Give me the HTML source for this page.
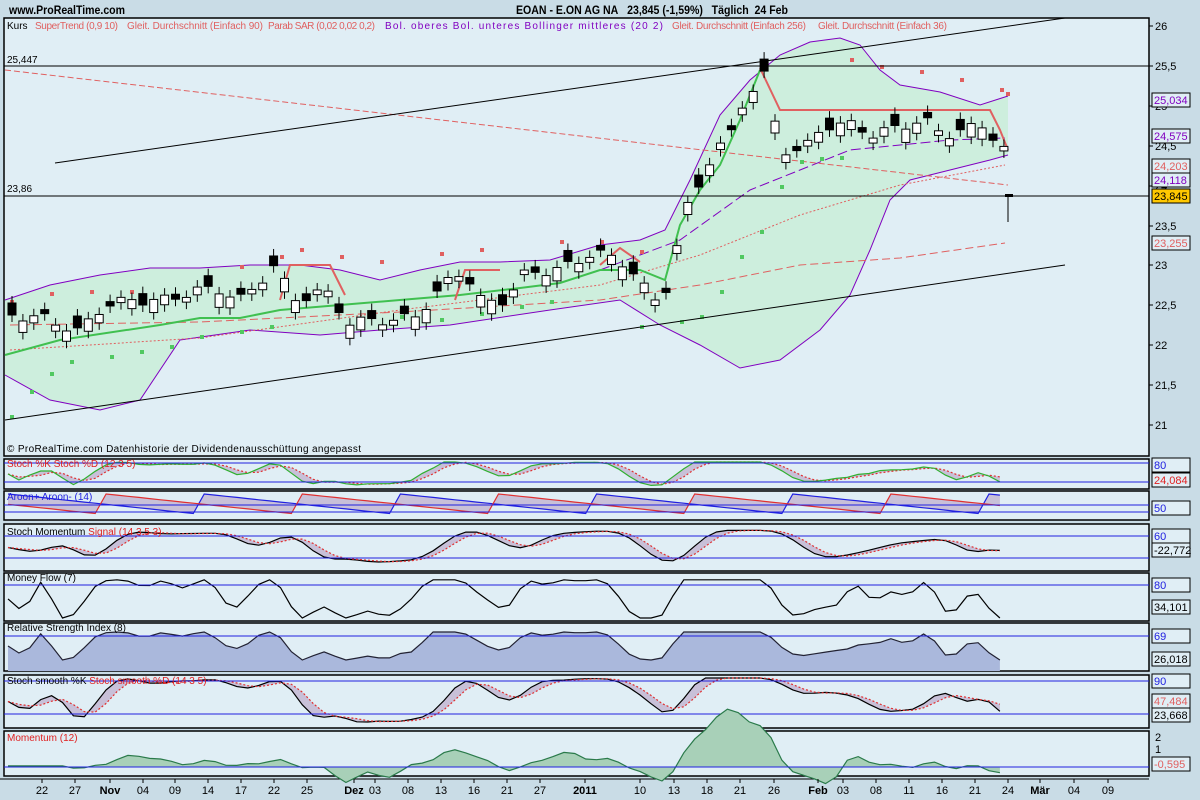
<!DOCTYPE html><html><head><meta charset="utf-8"><style>
body{margin:0;width:1200px;height:800px;background:#c9dce6;font-family:"Liberation Sans",sans-serif;overflow:hidden}
svg{position:absolute;left:0;top:0}
</style></head><body>
<svg id="s" width="1200" height="800" xmlns="http://www.w3.org/2000/svg" font-family="Liberation Sans, sans-serif">
<text x="9" y="14" font-size="12" font-weight="bold" textLength="116" lengthAdjust="spacingAndGlyphs">www.ProRealTime.com</text>
<text x="516" y="14" font-size="12" font-weight="bold" textLength="272" lengthAdjust="spacingAndGlyphs">EOAN - E.ON AG NA&#160;&#160;&#160;23,845 (-1,59%)&#160;&#160;&#160;Täglich&#160;&#160;24 Feb</text>
<g id="panels"></g>
<g id="content"></g>
<g font-size="10" lengthAdjust="spacing">
<text x="7" y="29">Kurs</text>
<text x="35" y="29" fill="#e06060" textLength="83">SuperTrend (0,9 10)</text>
<text x="127" y="29" fill="#e06060" textLength="136">Gleit. Durchschnitt (Einfach 90)</text>
<text x="268" y="29" fill="#e06060" textLength="107">Parab SAR (0,02 0,02 0,2)</text>
<text x="385" y="29" fill="#8000c0" textLength="278">Bol. oberes Bol. unteres Bollinger mittleres (20 2)</text>
<text x="672" y="29" fill="#e06060" textLength="134">Gleit. Durchschnitt (Einfach 256)</text>
<text x="818" y="29" fill="#e06060" textLength="129">Gleit. Durchschnitt (Einfach 36)</text>
<text x="7" y="63">25,447</text><text x="7" y="192">23,86</text>
<text x="7" y="452" textLength="354">© ProRealTime.com Datenhistorie der Dividendenausschüttung angepasst</text>
<text x="7" y="467" fill="#e02020">Stoch %K Stoch %D (12 3 5)</text>
<text x="7" y="500" fill="#2020e0">Aroon+ Aroon- (14)</text>
<text x="7" y="535">Stoch Momentum <tspan fill="#e02020">Signal (14 3 5 3)</tspan></text>
<text x="7" y="581">Money Flow (7)</text>
<text x="7" y="631">Relative Strength Index (8)</text>
<text x="7" y="684">Stoch smooth %K <tspan fill="#e02020">Stoch smooth %D (14 3 5)</tspan></text>
<text x="7" y="741" fill="#e02020">Momentum (12)</text>
</g>
<g id="axis" font-size="11"></g>
</svg>
<script>
const S=document.getElementById('s'),C=document.getElementById('content'),P=document.getElementById('panels'),A=document.getElementById('axis');
const NS='http://www.w3.org/2000/svg';
function el(t,a,p){const e=document.createElementNS(NS,t);for(const k in a)e.setAttribute(k,a[k]);(p||C).appendChild(e);if(a.text)e.textContent=a.text;return e;}
function interp(pts,x){for(let i=0;i<pts.length-1;i++){if(x<=pts[i+1][0]){const t=(x-pts[i][0])/(pts[i+1][0]-pts[i][0]);return pts[i][1]+t*(pts[i+1][1]-pts[i][1]);}}return pts[pts.length-1][1];}
function pl(pts){return pts.map(p=>p[0].toFixed(1)+','+p[1].toFixed(1)).join(' ');}
const panels=[[18,456],[459,489],[491,520],[524,571],[573,621],[623,671],[675,728],[731,776]];
panels.forEach(p=>el('rect',{x:4,y:p[0],width:1145,height:p[1]-p[0],fill:'#e0eef5',stroke:'#000','stroke-width':1.5},P));
el('line',{x1:0,y1:779,x2:1149,y2:779,stroke:'#000'},P);
const key=[[8,315],[40,318],[75,332],[100,305],[130,300],[165,300],[190,290],[215,290],[240,300],[270,265],[290,300],[320,290],[345,322],[380,320],[410,318],[440,285],[460,270],[480,305],[500,300],[520,275],[545,270],[570,265],[590,250],[610,260],[625,265],[645,295],[655,305],[665,280],[680,215],[695,185],[710,150],[725,140],[740,100],[760,75],[770,120],[780,150],[800,150],[820,125],[850,125],[870,135],[900,125],[920,120],[940,135],[960,130],[980,125],[1000,150],[1008,196]];
const xs=[];for(let x=8;x<=1000;x+=10.9)xs.push(x);
const ys=xs.map((x,i)=>interp(key,x)+Math.sin(i*1.7)*5);
const bu=[[5,300],[50,285],[100,275],[150,268],[200,268],[250,265],[300,265],[340,270],[380,280],[420,270],[460,262],[500,262],[550,260],[600,245],[640,240],[665,230],[690,180],[720,115],[750,80],[780,55],[810,42],[840,38],[860,45],[880,70],[900,85],[940,92],[980,105],[1008,96]];
const bl=[[5,375],[50,400],[100,410],[140,400],[180,340],[250,330],[320,335],[380,330],[450,325],[550,310],[620,300],[660,325],[700,345],[740,368],[780,360],[820,330],[850,295],[870,250],[890,200],[910,180],[950,170],[990,160],[1008,155]];
el('polygon',{points:pl(bu)+' '+pl(bl.slice().reverse()),fill:'#cdeedd'});
el('polyline',{points:pl(bu),fill:'none',stroke:'#8000c0'});
el('polyline',{points:pl(bl),fill:'none',stroke:'#8000c0'});
el('polyline',{points:'5,70 1008,185',fill:'none',stroke:'#e06060','stroke-dasharray':'6,3'});
el('polyline',{points:'10,350 200,338 400,310 600,285 700,255 800,215 900,185 1005,165',fill:'none',stroke:'#e06060','stroke-dasharray':'2,2'});
el('polyline',{points:'10,325 200,322 400,312 600,300 700,285 800,265 900,258 1005,243',fill:'none',stroke:'#e06060','stroke-dasharray':'8,4'});
el('polyline',{points:'600,270 680,240 750,190 850,150 950,140 1005,138',fill:'none',stroke:'#8000c0','stroke-dasharray':'10,4'});
el('polyline',{points:'5,355 60,340 160,325 200,318 240,318 280,310 340,305 400,300 460,295 520,288 560,283 600,270 640,270 665,280 680,225 700,190 720,165 740,120 750,95 760,70',fill:'none',stroke:'#40c050','stroke-width':2});
el('polyline',{points:'280,300 290,265 330,265 345,295',fill:'none',stroke:'#e06060','stroke-width':2});
el('polyline',{points:'455,300 465,270 500,270',fill:'none',stroke:'#e06060','stroke-width':2});
el('polyline',{points:'600,265 620,248 640,262',fill:'none',stroke:'#e06060','stroke-width':2});
el('polyline',{points:'760,68 780,110 990,110 1000,130 1008,150',fill:'none',stroke:'#e06060','stroke-width':2});
const g=[[10,415],[30,390],[50,372],[70,360],[110,355],[140,350],[170,345],[200,335],[240,330],[270,325],[400,315],[440,318],[480,312],[520,305],[550,300],[640,325],[680,320],[700,315],[720,290],[740,255],[760,230],[780,185],[800,160],[820,157],[840,156]];
g.forEach(p=>el('rect',{x:p[0],y:p[1],width:4,height:4,fill:'#50c860'}));
const r=[[10,300],[50,292],[90,290],[130,290],[240,265],[280,255],[300,248],[340,255],[380,260],[440,252],[480,248],[560,240],[600,240],[640,250],[850,58],[880,65],[920,70],[960,78],[1000,88],[1006,92]];
r.forEach(p=>el('rect',{x:p[0],y:p[1],width:4,height:4,fill:'#e06060'}));
xs.forEach((x,i)=>{const c=ys[i],o=ys[i]+(i%3==0?-8:9)*(1+Math.cos(i)*.5);const top=Math.min(o,c),bot=Math.max(o,c);
el('line',{x1:x+4,y1:top-7,x2:x+4,y2:bot+7,stroke:'#000'});
el('rect',{x:x,y:top,width:8,height:Math.max(1,bot-top),fill:o>c?'#fff':'#000',stroke:'#000','stroke-width':1});});
el('line',{x1:1008,y1:196,x2:1008,y2:222,stroke:'#000'});el('rect',{x:1005,y:194,width:8,height:3,fill:'#000'});
el('line',{x1:55,y1:163,x2:1065,y2:18,stroke:'#000'});
el('line',{x1:5,y1:420,x2:1065,y2:265,stroke:'#000'});
el('line',{x1:4,y1:66,x2:1149,y2:66,stroke:'#000'});
el('line',{x1:4,y1:196,x2:1149,y2:196,stroke:'#000'});
[['26',26],['25,5',66],['25',106],['24,5',146],['24',186],['23,5',226],['23',265],['22,5',305],['22',345],['21,5',385],['21',425]].forEach(a=>{el('line',{x1:1149,y1:a[1],x2:1153,y2:a[1],stroke:'#000'},A);el('text',{x:1155,y:a[1]+4,text:a[0]},A);});
function box(y,t,col,bg){el('rect',{x:1152,y:y-7,width:38,height:14,fill:bg||'#e0eef5',stroke:'#000'},A);el('text',{x:1154,y:y+4,fill:col,text:t},A);}
box(100,'25,034','#8000c0');box(136,'24,575','#8000c0');box(166,'24,203','#e06060');box(180,'24,118','#8000c0');box(196,'23,845','#000','#ffc800');box(243,'23,255','#e06060');
const N=xs.length;const cl=ys.map(v=>-v);
function stoch(k){return cl.map((v,i)=>{let lo=1e9,hi=-1e9;for(let j=Math.max(0,i-k);j<=i;j++){lo=Math.min(lo,cl[j]);hi=Math.max(hi,cl[j]);}return hi>lo?(v-lo)/(hi-lo):.5;});}
function sm(a,n){return a.map((v,i)=>{let s=0,c=0;for(let j=Math.max(0,i-n+1);j<=i;j++){s+=a[j];c++;}return s/c;});}
function pts(p,vals,lo,hi){const [t,b]=p;return xs.map((x,i)=>[x,b-3-(vals[i]-lo)/(hi-lo)*(b-t-6)]);}
function draw(p,vals,lo,hi,col,fill,dash,base){const q=pts(p,vals,lo,hi);const b=base||p[1];
if(fill){el('polygon',{points:pl([[xs[0],b]].concat(q,[[xs[N-1],b]])),fill:fill});}
el('polyline',{points:pl(q),fill:'none',stroke:col,'stroke-dasharray':dash||'','stroke-width':1.2});}
function band(p,a,b,lo,hi){const qa=pts(p,a,lo,hi),qb=pts(p,b,lo,hi);el('polygon',{points:pl(qa)+' '+pl(qb.slice().reverse()),fill:'#c8c0d8'});}
function hl(y){el('line',{x1:4,y1:y,x2:1149,y2:y,stroke:'#2020e0'});}
const k1=sm(stoch(8),3),d1=sm(k1,3);
band(panels[1],k1,d1,0,1);draw(panels[1],d1,0,1,'#e03030',null,'2,2');draw(panels[1],k1,0,1,'#30b030');hl(463);hl(482);
const au=xs.map((x,i)=>{const t=(i%18)/18;return 1-t*0.9;}),ad=xs.map((x,i)=>{const t=((i+9)%18)/18;return 1-t*0.9;});
band(panels[2],au,ad,0,1);draw(panels[2],au,0,1,'#2020e0');draw(panels[2],ad,0,1,'#e03030');hl(505);hl(512);
const sm1=sm(sm(k1.map(v=>v-.5),3),2);band(panels[3],sm1,sm(sm1,3),-.6,.6);draw(panels[3],sm1,-.6,.6,'#000');draw(panels[3],sm(sm1,3),-.6,.6,'#e03030',null,'2,2');hl(536);hl(558);
const mf=sm(stoch(7),2);draw(panels[4],mf,0,1.1,'#000',null);hl(585);
const rsi=sm(stoch(8),2).map(v=>.2+v*.7);draw(panels[5],rsi,0,1.05,'#223','#aab8dc');hl(636);
const ss=sm(sm(stoch(14),3),2);band(panels[6],ss,sm(ss,3),0,1);draw(panels[6],ss,0,1,'#000');draw(panels[6],sm(ss,3),0,1,'#e03030',null,'2,2');hl(681);hl(714);
const mom=sm(ys.map((v,i)=>i>=6?ys[i-6]-v:0),2);draw(panels[7],mom,-20,90,'#2a7a4a','#a8d0b8',null,767);hl(767);
[[465,'80','#2020e0'],[480,'24,084','#e02020'],[508,'50','#2020e0'],[536,'60','#2020e0'],[550,'-22,772','#000'],[585,'80','#2020e0'],[607,'34,101','#000'],[636,'69','#2020e0'],[659,'26,018','#000'],[681,'90','#2020e0'],[701,'47,484','#e06060'],[715,'23,668','#000'],[764,'-0,595','#e06060']].forEach(a=>box(a[0],a[1],a[2]));
[[737,'2'],[749,'1']].forEach(a=>el('text',{x:1155,y:a[0]+4,text:a[1]},A));
[['22',42],['27',75],['Nov',110,1],['04',143],['09',175],['14',208],['17',241],['22',274],['25',307],['Dez',354,1],['03',375],['08',408],['13',441],['16',474],['21',507],['27',540],['2011',585,1],['10',640],['13',674],['18',707],['21',740],['26',774],['Feb',818,1],['03',843],['08',876],['11',909],['16',942],['21',975],['24',1008],['Mär',1040,1],['04',1074],['09',1108]].forEach(a=>{el('line',{x1:a[1],y1:779,x2:a[1],y2:783,stroke:'#000'},A);el('text',{x:a[1],y:794,'text-anchor':'middle','font-weight':a[2]?'bold':'normal',text:a[0]},A);});
</script>
</body></html>
